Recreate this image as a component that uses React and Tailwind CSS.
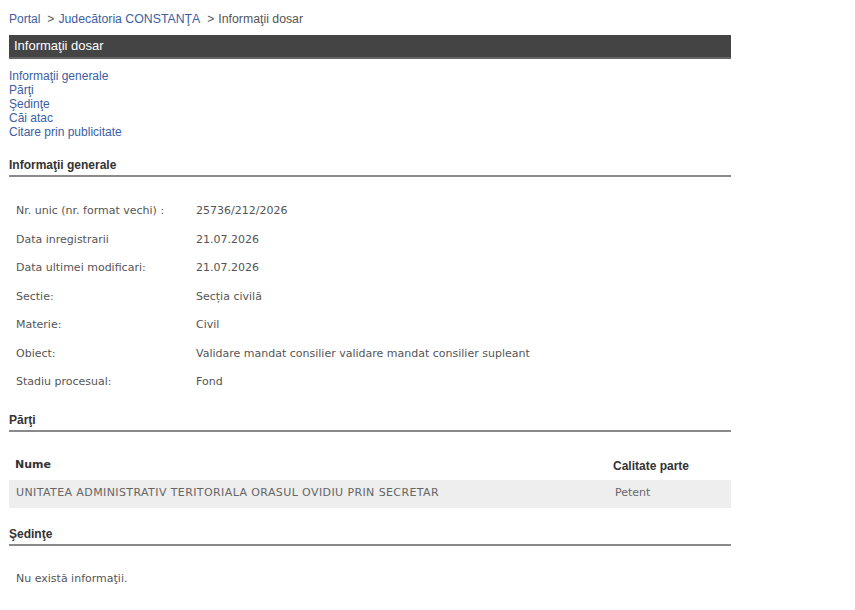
import React from "react";

const rows = [
  ["Nr. unic (nr. format vechi) :", "25736/212/2026"],
  ["Data inregistrarii", "21.07.2026"],
  ["Data ultimei modificari:", "21.07.2026"],
  ["Sectie:", "Secția civilă"],
  ["Materie:", "Civil"],
  ["Obiect:", "Validare mandat consilier validare mandat consilier supleant"],
  ["Stadiu procesual:", "Fond"],
];

const links = ["Informaţii generale", "Părţi", "Şedinţe", "Căi atac", "Citare prin publicitate"];

const arial = "font-['Liberation_Sans',Arial,sans-serif]";
const tahoma = "font-['DejaVu_Sans',Tahoma,sans-serif]";

const Heading = ({ children }) => (
  <div className={`${arial} text-[12px] font-bold text-[#333] border-b-2 border-[#8a8a8a] pb-[3px] leading-[14px]`}>
    {children}
  </div>
);

const App = () => {
  return (
    <div className="min-h-screen bg-white pl-[9px] pt-[12px]">
      <div className="w-[722px]">
        {/* Breadcrumb */}
        <div className={`${arial} text-[12px] leading-[14px] text-[#555] flex`}>
          <a href="#" className="text-[#3c5ea3]">Portal</a>
          <span className="ml-[7px] mr-[4px]">&gt;</span>
          <a href="#" className="text-[#3c5ea3] text-[12.3px]">Judecătoria CONSTANŢA</a>
          <span className="ml-[7px] mr-[4px]">&gt;</span>
          <span className="text-[12.3px]">Informaţii dosar</span>
        </div>

        {/* Title bar */}
        <div className={`${arial} mt-[9px] bg-[#444] border-b-2 border-[#666] text-white text-[13px] leading-[22px] px-[5px]`}>
          Informaţii dosar
        </div>

        {/* Links */}
        <div className={`${arial} mt-[10px] flex flex-col text-[12px] leading-[14px]`}>
          {links.map((l) => (
            <a key={l} href="#" className="text-[#3c5ea3] w-fit">{l}</a>
          ))}
        </div>

        <div className="mt-[19px]">
          <Heading>Informaţii generale</Heading>
        </div>

        {/* General info */}
        <div className={`${tahoma} mt-[20px] text-[11px] text-[#555] flex flex-col`}>
          {rows.map(([k, v]) => (
            <div key={k} className="flex h-[28.5px] items-center">
              <div className="w-[187px] pl-[7px]">{k}</div>
              <div>{v}</div>
            </div>
          ))}
        </div>

        <div className="mt-[16px]">
          <Heading>Părţi</Heading>
        </div>

        {/* Parties */}
        <div className="mt-[20px]">
          <div className="flex h-[28px] items-center text-[#333] font-bold">
            <div className={`${tahoma} flex-1 pl-[6px] text-[11px]`}>Nume</div>
            <div className={`${arial} w-[118px] text-[12px]`}>Calitate parte</div>
          </div>
          <div className={`${tahoma} flex h-[28px] items-center bg-[#eee] text-[11px] text-[#666]`}>
            <div className="flex-1 pl-[7px] tracking-[0.4px]">UNITATEA ADMINISTRATIV TERITORIALA ORASUL OVIDIU PRIN SECRETAR</div>
            <div className="w-[116px]">Petent</div>
          </div>
        </div>

        <div className="mt-[19px]">
          <Heading>Şedinţe</Heading>
        </div>

        <div className={`${tahoma} mt-[25px] pl-[7px] text-[11px] text-[#555]`}>Nu există informaţii.</div>
      </div>
    </div>
  );
};

export default App;
